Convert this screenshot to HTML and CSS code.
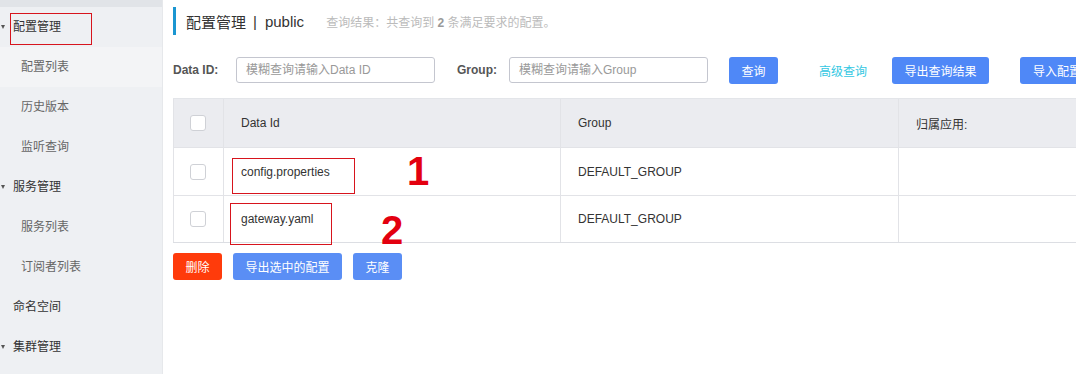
FILE: index.html
```html
<!DOCTYPE html>
<html lang="zh">
<head>
<meta charset="utf-8">
<link rel="stylesheet" href="styles.css">
</head>
<body>
<div class="app">
  <aside class="sidebar">
    <div class="side-top"></div>
    <div class="side-item group marked"><span class="caret"></span>配置管理<span class="mark-box side-mark"></span></div>
    <div class="side-item sub active">配置列表</div>
    <div class="side-item sub">历史版本</div>
    <div class="side-item sub">监听查询</div>
    <div class="side-item group"><span class="caret"></span>服务管理</div>
    <div class="side-item sub">服务列表</div>
    <div class="side-item sub">订阅者列表</div>
    <div class="side-item plain">命名空间</div>
    <div class="side-item group"><span class="caret"></span>集群管理</div>
  </aside>
  <main class="main">
    <div class="title-bar">
      <span class="title">配置管理</span><span class="sep">|</span><span class="title">public</span>
      <span class="result">查询结果：共查询到 <b>2</b> 条满足要求的配置。</span>
    </div>
    <div class="filter">
      <label class="flabel">Data ID:</label>
      <div class="input">模糊查询请输入Data ID</div>
      <label class="flabel glabel">Group:</label>
      <div class="input">模糊查询请输入Group</div>
      <button class="btn btn-query">查询</button>
      <a class="link">高级查询</a>
      <button class="btn btn-export">导出查询结果</button>
      <button class="btn btn-import">导入配置</button>
    </div>
    <div class="table">
      <div class="row head">
        <div class="cell c-check"><span class="check"></span></div>
        <div class="cell c-id">Data Id</div>
        <div class="cell c-group">Group</div>
        <div class="cell c-app">归属应用:</div>
      </div>
      <div class="row r1">
        <div class="cell c-check"><span class="check"></span></div>
        <div class="cell c-id">config.properties<span class="mark-box mark1"></span><span class="num num1">1</span></div>
        <div class="cell c-group">DEFAULT_GROUP</div>
        <div class="cell c-app"></div>
      </div>
      <div class="row r2">
        <div class="cell c-check"><span class="check"></span></div>
        <div class="cell c-id">gateway.yaml<span class="mark-box mark2"></span><span class="num num2">2</span></div>
        <div class="cell c-group">DEFAULT_GROUP</div>
        <div class="cell c-app"></div>
      </div>
    </div>
    <div class="actions">
      <button class="btn btn-del">删除</button>
      <button class="btn btn-export-sel">导出选中的配置</button>
      <button class="btn btn-clone">克隆</button>
    </div>
  </main>
</div>
</body>
</html>
```
FILE: styles.css
```css
* { box-sizing: border-box; }
html, body { margin: 0; padding: 0; background: #fff; }
body {
  width: 1076px;
  height: 374px;
  overflow: hidden;
  font-family: "Liberation Sans", "Noto Sans CJK SC", sans-serif;
  font-size: 12px;
  color: #333;
}
.app { display: flex; height: 374px; }
.sidebar {
  width: 163px;
  flex: none;
  background: #eef0f3;
  display: flex;
  flex-direction: column;
  border-right: 1px solid #e6e8eb;
}
.side-top { height: 7px; background: #e1e4e8; }
.side-item {
  height: 40px;
  line-height: 41px;
  font-size: 12px;
  position: relative;
  flex: none;
}
.side-item.group { padding-left: 13px; color: #333; }
.side-item.plain { padding-left: 13px; color: #333; }
.side-item.sub { padding-left: 21px; color: #666; }
.side-item.active { background: #f3f4f6; }
.caret {
  position: absolute;
  left: 1px;
  top: 18px;
  width: 0; height: 0;
  border-left: 2px solid transparent;
  border-right: 2px solid transparent;
  border-top: 4px solid #555;
}
.mark-box {
  position: absolute;
  border: 1px solid #d7141d;
  pointer-events: none;
}
.side-mark { left: 10px; top: 6px; width: 82px; height: 32px; }

.main {
  flex: 1;
  padding-left: 10px;
  overflow: hidden;
  min-width: 0;
}
.title-bar {
  margin-top: 7px;
  height: 28px;
  border-left: 3px solid #1b96d1;
  padding-left: 10px;
  display: flex;
  align-items: center;
  white-space: nowrap;
}
.title { font-size: 15px; color: #333; }
.sep { font-size: 15px; color: #333; margin: 0 8px 0 7px; }
.result { margin-left: 22px; font-size: 12px; color: #bbb; }
.result b { color: #999; }

.filter {
  margin-top: 22px;
  height: 26px;
  display: flex;
  align-items: center;
  white-space: nowrap;
}
.flabel { font-weight: bold; color: #555; width: 63px; flex: none; }
.glabel { margin-left: 22px; width: 52px; }
.input {
  width: 199px;
  height: 26px;
  flex: none;
  border: 1px solid #c4c6cf;
  border-radius: 3px;
  padding-left: 9px;
  line-height: 24px;
  color: #999;
}
.btn {
  font-family: inherit;
  font-size: 12px;
  height: 27px;
  border: none;
  border-radius: 3px;
  color: #fff;
  background: #4f88f7;
  padding: 0;
  flex: none;
}
.btn-query { width: 49px; margin-left: 21px; }
.link { color: #33c7e2; margin-left: 41px; width: 73px; flex: none; }
.btn-export { width: 97px; }
.btn-import { width: 80px; margin-left: 31px; text-align: left; padding-left: 13px; }

.table {
  margin-top: 15px;
  width: 1000px;
  border-top: 1px solid #e3e5e9;
  border-bottom: 1px solid #dcdee3;
}
.row { display: flex; }
.row.head { background: #ebecf0; height: 49px; border-bottom: 1px solid #e2e3e7; }
.row.r1 { height: 48px; border-bottom: 1px solid #e2e3e7; }
.row.r2 { height: 46px; }
.cell {
  display: flex;
  align-items: center;
  padding-left: 17px;
  border-right: 1px solid #e2e3e7;
  position: relative;
  color: #333;
}
.c-check { width: 51px; padding-left: 16px; border-left: 1px solid #e2e3e7; }
.c-id { width: 337px; }
.c-group { width: 338px; }
.c-app { flex: 1; border-right: none; }
.check {
  width: 16px; height: 16px;
  border: 1px solid #cfd1d6;
  border-radius: 3px;
  background: #fff;
}
.mark1 { left: 8px; top: 10px; width: 123px; height: 36px; }
.mark2 { left: 6px; top: 7px; width: 102px; height: 42px; }
.num {
  position: absolute;
  font-family: "Liberation Sans", Arial, sans-serif;
  font-weight: bold;
  font-size: 40px;
  color: #e3000f;
  line-height: 1;
}
.num1 { left: 183px; top: 3px; }
.num2 { left: 157px; top: 14px; }

.actions {
  margin-top: 10px;
  display: flex;
  gap: 11px;
}
.btn-del { width: 49px; background: #ff3b0b; }
.btn-export-sel { width: 109px; background: #5a8ef5; }
.btn-clone { width: 49px; background: #5a8ef5; }
```
